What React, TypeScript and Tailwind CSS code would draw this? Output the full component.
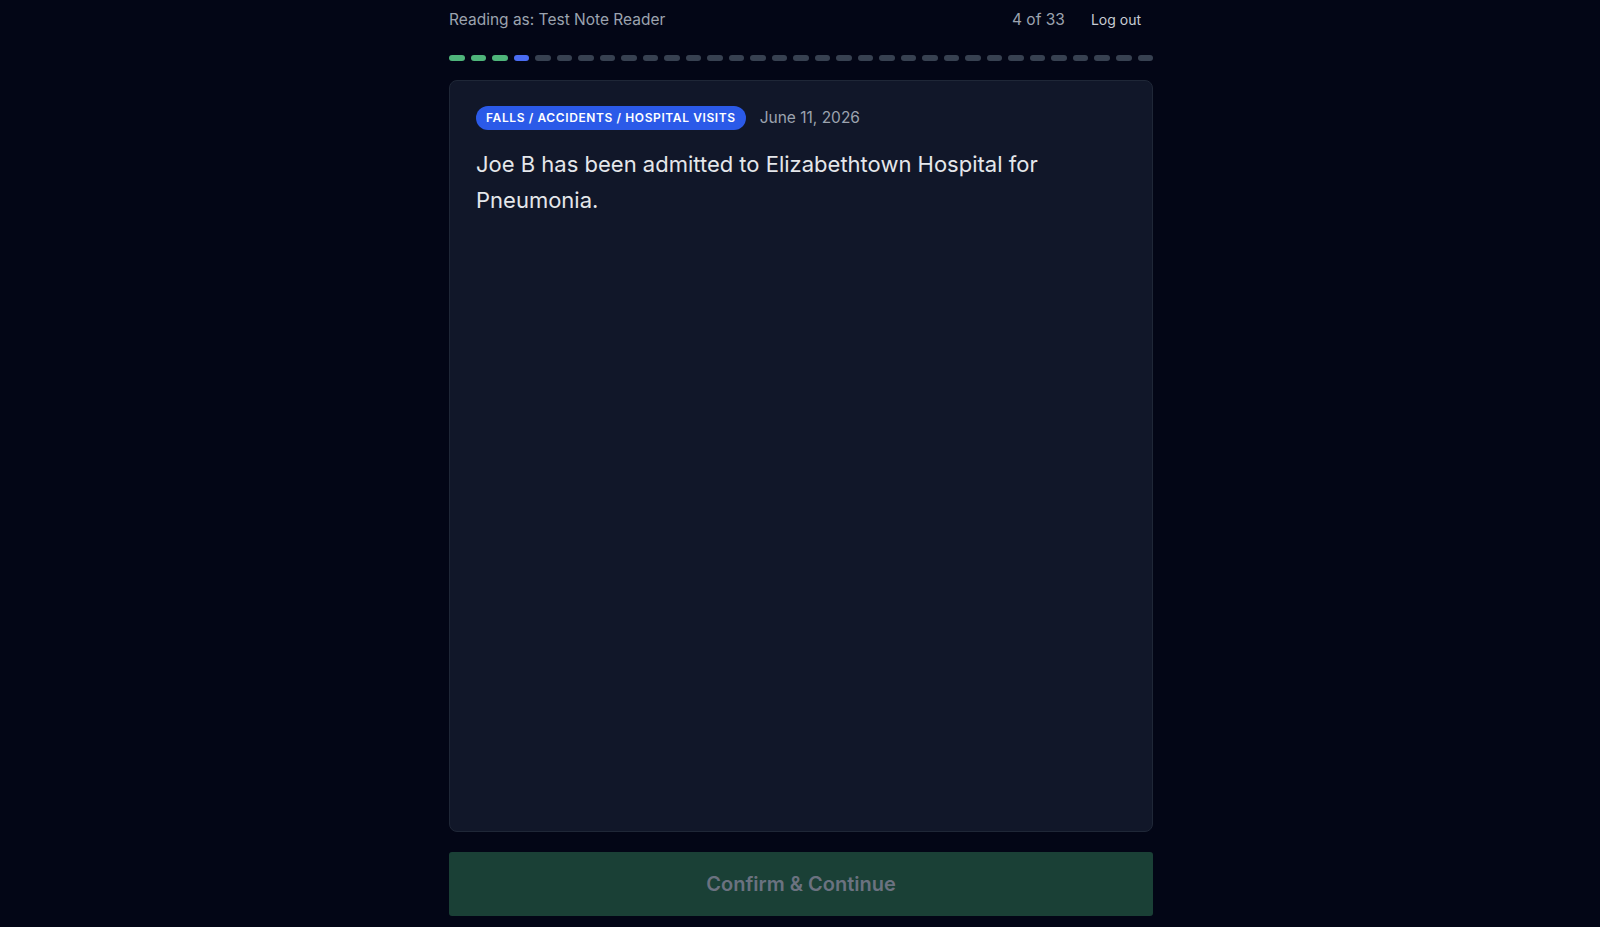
import React from 'react'

const TOTAL = 33
const CURRENT = 4

function ProgressDots() {
  return (
    <div className="mt-[25px] flex gap-[6px]">
      {Array.from({ length: TOTAL }).map((_, i) => {
        const n = i + 1
        const cls =
          n < CURRENT ? 'bg-[#4fb57b]' : n === CURRENT ? 'bg-[#4a6cf2]' : 'bg-[#374151]'
        return <div key={i} className={`h-[6px] flex-1 rounded-full ${cls}`} />
      })}
    </div>
  )
}

export default function App() {
  return (
    <div
      className="h-screen w-full overflow-hidden bg-[#030616] text-gray-100"
      style={{ fontFamily: 'Inter, "Noto Sans", sans-serif' }}
    >
      <div className="mx-auto flex h-full w-[704px] translate-x-[1px] flex-col pb-[11px]">
        {/* header */}
        <div className="flex items-center justify-between pt-[10px] text-[15.5px] leading-5">
          <span className="text-[#9ca3af]">Reading as: Test Note Reader</span>
          <div className="flex items-center gap-[14px]">
            <span className="text-[#9ca3af]">4 of 33</span>
            <button type="button" className="px-3 text-sm text-[#c7ccd4]">
              Log out
            </button>
          </div>
        </div>

        <ProgressDots />

        {/* note card */}
        <div className="mt-[19px] flex-1 rounded-lg border border-[#1f2737] bg-[#111729] px-[26px] py-[25px]">
          <div className="flex items-center gap-3.5">
            <span className="rounded-full bg-[#2b5ae8] px-2.5 py-[4px] text-xs font-semibold tracking-[0.05em] text-white uppercase">
              Falls / Accidents / Hospital Visits
            </span>
            <span className="text-[15.5px] text-[#9ca3af]">June 11, 2026</span>
          </div>
          <p className="mt-4 text-[22px] leading-[36px] text-[#e5e7eb]">
            Joe B has been admitted to Elizabethtown Hospital for Pneumonia.
          </p>
        </div>

        <button
          type="button"
          disabled
          className="mt-5 h-16 w-full rounded-[3px] bg-[#1a4036] text-xl font-semibold text-[#6b7280]"
        >
          Confirm &amp; Continue
        </button>
      </div>
    </div>
  )
}
